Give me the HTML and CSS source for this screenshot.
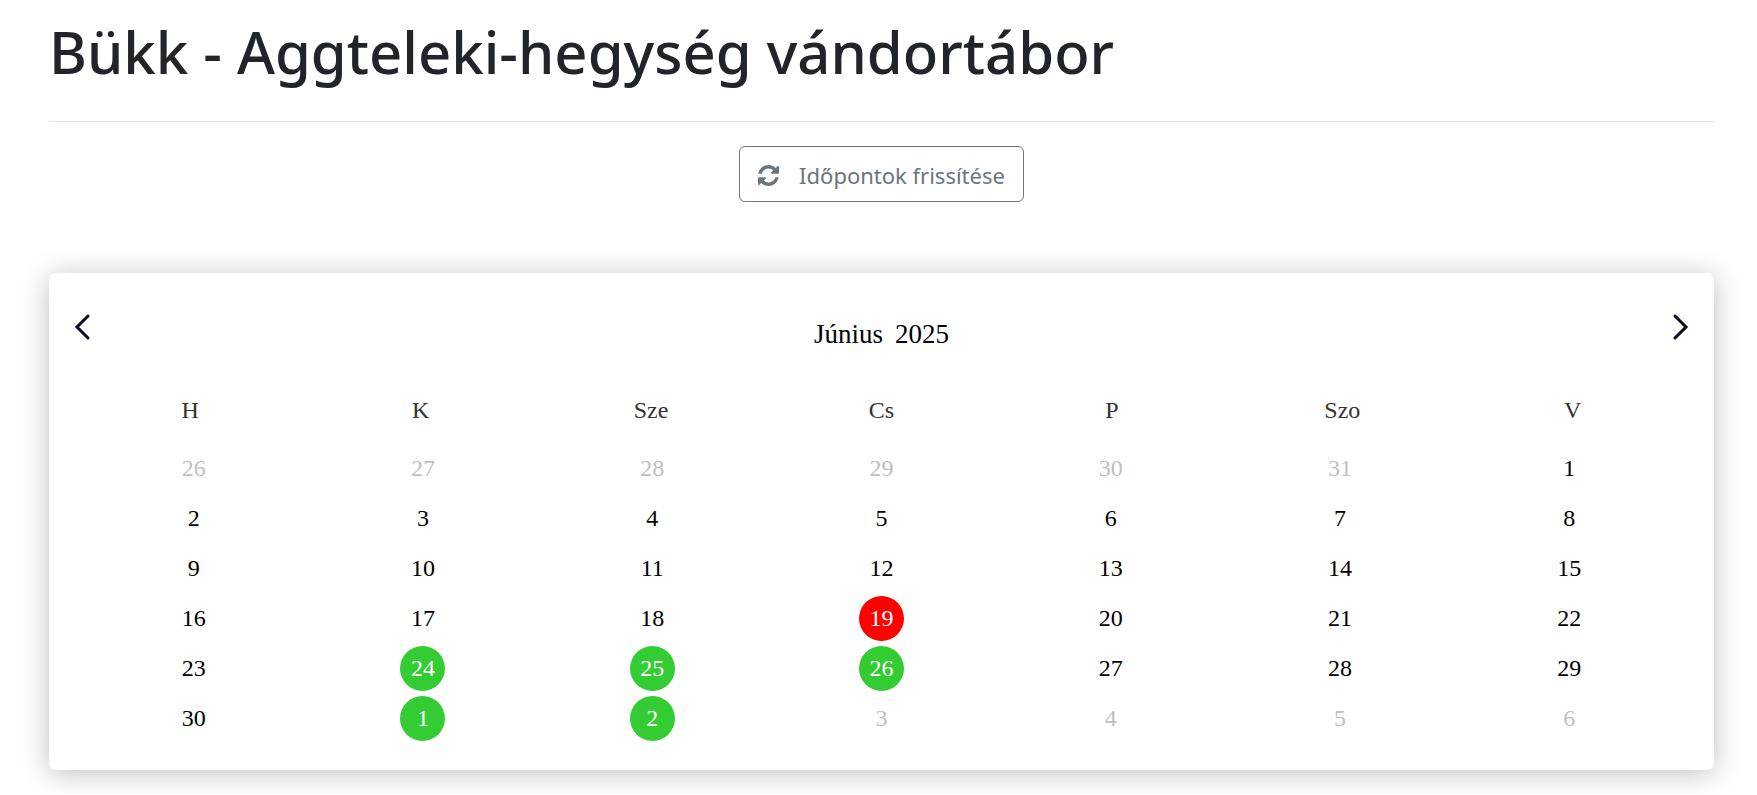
FILE: index.html
```html
<!DOCTYPE html>
<html lang="hu">
<head>
<meta charset="utf-8">
<meta name="viewport" content="width=device-width, initial-scale=1">
<title>Bükk - Aggteleki-hegység vándortábor</title>
<link rel="stylesheet" href="styles.css">
</head>
<body>
	<h1>Bükk - Aggteleki-hegység vándortábor</h1>
	<hr>
	<div class="toolbar">
		<button type="button" class="refresh">
			<svg viewBox="0 0 1536 1536" aria-hidden="true"><path d="M1511 928q0 5-1 7-64 268-268 434.500t-478 166.500q-146 0-282.500-55t-243.500-157l-129 129q-19 19-45 19t-45-19-19-45v-448q0-26 19-45t45-19h448q26 0 45 19t19 45-19 45l-137 137q71 66 161 102t187 36q134 0 250-65t186-179q11-17 53-117 8-23 30-23h192q13 0 22.500 9.500t9.500 22.500zm25-800v448q0 26-19 45t-45 19h-448q-26 0-45-19t-19-45 19-45l138-138q-148-137-349-137-134 0-250 65t-186 179q-11 17-53 117-8 23-30 23h-199q-13 0-22.500-9.500t-9.500-22.500v-7q65-268 270-434.500t480-166.500q146 0 284 55.500t245 156.500l130-129q19-19 45-19t45 19 19 45z"/></svg>
			Időpontok frissítése
		</button>
	</div>
	<div class="calendar">
		<div class="calendar-header">
			<button type="button" class="arrow" aria-label="Előző hónap">
				<svg viewBox="0 0 18 28" aria-hidden="true"><path d="M15 3L4 14l11 11"/></svg>
			</button>
			<div class="month"><span>Június</span><span>2025</span></div>
			<button type="button" class="arrow" aria-label="Következő hónap">
				<svg viewBox="0 0 18 28" aria-hidden="true"><path d="M3 3l11 11L3 25"/></svg>
			</button>
		</div>
		<table>
			<thead>
				<tr><th>H</th><th>K</th><th>Sze</th><th>Cs</th><th>P</th><th>Szo</th><th>V</th></tr>
			</thead>
			<tbody>
				<tr><td class="other">26</td><td class="other">27</td><td class="other">28</td><td class="other">29</td><td class="other">30</td><td class="other">31</td><td>1</td></tr>
				<tr><td>2</td><td>3</td><td>4</td><td>5</td><td>6</td><td>7</td><td>8</td></tr>
				<tr><td>9</td><td>10</td><td>11</td><td>12</td><td>13</td><td>14</td><td>15</td></tr>
				<tr><td>16</td><td>17</td><td>18</td><td><span class="day full">19</span></td><td>20</td><td>21</td><td>22</td></tr>
				<tr><td>23</td><td><span class="day free">24</span></td><td><span class="day free">25</span></td><td><span class="day free">26</span></td><td>27</td><td>28</td><td>29</td></tr>
				<tr><td>30</td><td><span class="day free">1</span></td><td><span class="day free">2</span></td><td class="other">3</td><td class="other">4</td><td class="other">5</td><td class="other">6</td></tr>
			</tbody>
		</table>
	</div>
</body>
</html>
```
FILE: styles.css
```css
* {
  box-sizing: border-box;
}
body {
  margin: 0;
  padding: 16px 43px 24px 49px;
  background-color: #fff;
  color: #212529;
  font-family: "Segoe UI", "Noto Sans", sans-serif;
  font-size: 24px;
}
h1 {
  margin: 0 0 33px;
  font-size: 58px;
  font-weight: 500;
  line-height: 72px;
}
hr {
  margin: 0 0 24px;
  border: 0;
  border-top: 1px solid #e2e3e4;
}
.toolbar {
  display: flex;
  justify-content: center;
  margin-bottom: 71px;
}
.refresh {
  display: flex;
  align-items: center;
  gap: 20px;
  height: 56px;
  padding: 2px 18px 0;
  border: 1px solid #6c757d;
  border-radius: 6px;
  background: none;
  color: #6c757d;
  font: inherit;
  font-size: 22px;
}
.refresh svg {
  width: 21px;
  height: 21px;
  fill: currentColor;
}
.calendar {
  padding: 36px 24px 24px;
  border-radius: 7px;
  background-color: #fff;
  box-shadow: 0 3px 28px rgba(0, 0, 0, 0.26);
  color: #000;
  font-family: "Times New Roman", "Liberation Serif", serif;
}
.calendar-header {
  display: flex;
  justify-content: space-between;
  align-items: flex-start;
  height: 78px;
}
.arrow {
  padding: 4px 0 0;
  border: 0;
  background: none;
}
.arrow svg {
  display: block;
  width: 18px;
  height: 28px;
  fill: none;
  stroke: #0a0a1e;
  stroke-width: 3;
  stroke-linecap: round;
}
.month {
  display: flex;
  gap: 12px;
  padding-top: 10px;
  font-size: 27px;
  line-height: 30px;
}
table, thead, tbody {
  display: block;
}
table {
  padding: 0 2px;
}
tr {
  display: grid;
  grid-template-columns: repeat(7, 1fr);
}
thead {
  margin-bottom: 13px;
}
tbody {
  padding: 0 4px;
}
tbody tr {
  margin-bottom: 5px;
}
th, td {
  display: flex;
  justify-content: center;
  align-items: center;
  padding: 0;
  font-weight: normal;
}
th {
  height: 46px;
  color: #333;
}
td {
  height: 45px;
}
.other {
  color: #bfbfbf;
}
.day {
  width: 45px;
  border-radius: 50%;
  color: #fff;
  line-height: 45px;
  text-align: center;
}
.full {
  background-color: #f00;
}
.free {
  background-color: #3c3;
}
```
